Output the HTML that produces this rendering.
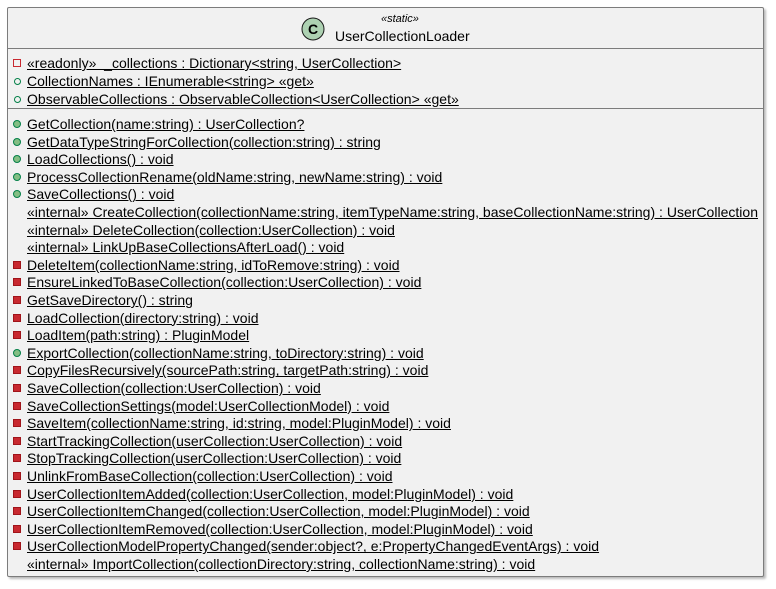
<!DOCTYPE html>
<html><head><meta charset="utf-8"><style>
html,body{margin:0;padding:0;background:#fff;width:776px;height:589px;overflow:hidden}
body{font-family:"Liberation Sans",sans-serif;color:#000;position:relative}
.box{position:absolute;left:7px;top:7px;width:755px;height:568px;background:#f1f1f1;border:1px solid #7c7c7c;border-radius:2px;box-shadow:2px 2px 2px #bbb}
.sep{position:absolute;left:8px;width:755px;height:1px;background:#7c7c7c}
.r{position:absolute;left:27px;font-size:14px;line-height:17px;white-space:nowrap;letter-spacing:0.01px}
.r span{text-decoration:underline}
.ic{position:absolute;left:-14px;top:4px;width:8px;height:8px;box-sizing:border-box}
.pf{border:1px solid #c82930}
.pm{background:#c82930;border:1px solid #a0141a}
.uf{border:1px solid #038048;border-radius:50%;left:-13px;top:5px;width:7px;height:7px}
.um{background:#84be84;border:1px solid #038048;border-radius:50%}
</style></head><body>
<div class="box"></div>
<div class="sep" style="top:48px"></div>
<div class="sep" style="top:108px"></div>
<svg style="position:absolute;left:300px;top:16px" width="28" height="28"><circle cx="13" cy="13" r="11" fill="#add1b2" stroke="#181818" stroke-width="1"/><text x="13" y="18" text-anchor="middle" font-family="Liberation Sans" font-weight="bold" font-size="14">C</text></svg>
<div style="position:absolute;left:381px;top:13px;font-size:11px;font-style:italic;line-height:13px">«static»</div>
<div style="position:absolute;left:335px;top:28px;font-size:14px;line-height:17px">UserCollectionLoader</div>

<div class="r" style="top:55px"><i class="ic pf"></i><span>«readonly» &nbsp;_collections : Dictionary&lt;string, UserCollection&gt;</span></div>
<div class="r" style="top:73px"><i class="ic uf"></i><span>CollectionNames : IEnumerable&lt;string&gt; «get»</span></div>
<div class="r" style="top:91px"><i class="ic uf"></i><span>ObservableCollections : ObservableCollection&lt;UserCollection&gt; «get»</span></div>

<div class="r" style="top:116px"><i class="ic um"></i><span>GetCollection(name:string) : UserCollection?</span></div>
<div class="r" style="top:133.6px"><i class="ic um"></i><span>GetDataTypeStringForCollection(collection:string) : string</span></div>
<div class="r" style="top:151.2px"><i class="ic um"></i><span>LoadCollections() : void</span></div>
<div class="r" style="top:168.8px"><i class="ic um"></i><span>ProcessCollectionRename(oldName:string, newName:string) : void</span></div>
<div class="r" style="top:186.4px"><i class="ic um"></i><span>SaveCollections() : void</span></div>
<div class="r" style="top:204px"><span>«internal» CreateCollection(collectionName:string, itemTypeName:string, baseCollectionName:string) : UserCollection</span></div>
<div class="r" style="top:221.6px"><span>«internal» DeleteCollection(collection:UserCollection) : void</span></div>
<div class="r" style="top:239.2px"><span>«internal» LinkUpBaseCollectionsAfterLoad() : void</span></div>
<div class="r" style="top:256.8px"><i class="ic pm"></i><span>DeleteItem(collectionName:string, idToRemove:string) : void</span></div>
<div class="r" style="top:274.4px"><i class="ic pm"></i><span>EnsureLinkedToBaseCollection(collection:UserCollection) : void</span></div>
<div class="r" style="top:292px"><i class="ic pm"></i><span>GetSaveDirectory() : string</span></div>
<div class="r" style="top:309.6px"><i class="ic pm"></i><span>LoadCollection(directory:string) : void</span></div>
<div class="r" style="top:327.2px"><i class="ic pm"></i><span>LoadItem(path:string) : PluginModel</span></div>
<div class="r" style="top:344.8px"><i class="ic um"></i><span>ExportCollection(collectionName:string, toDirectory:string) : void</span></div>
<div class="r" style="top:362.4px"><i class="ic pm"></i><span>CopyFilesRecursively(sourcePath:string, targetPath:string) : void</span></div>
<div class="r" style="top:380px"><i class="ic pm"></i><span>SaveCollection(collection:UserCollection) : void</span></div>
<div class="r" style="top:397.6px"><i class="ic pm"></i><span>SaveCollectionSettings(model:UserCollectionModel) : void</span></div>
<div class="r" style="top:415.2px"><i class="ic pm"></i><span>SaveItem(collectionName:string, id:string, model:PluginModel) : void</span></div>
<div class="r" style="top:432.8px"><i class="ic pm"></i><span>StartTrackingCollection(userCollection:UserCollection) : void</span></div>
<div class="r" style="top:450.4px"><i class="ic pm"></i><span>StopTrackingCollection(userCollection:UserCollection) : void</span></div>
<div class="r" style="top:468px"><i class="ic pm"></i><span>UnlinkFromBaseCollection(collection:UserCollection) : void</span></div>
<div class="r" style="top:485.6px"><i class="ic pm"></i><span>UserCollectionItemAdded(collection:UserCollection, model:PluginModel) : void</span></div>
<div class="r" style="top:503.2px"><i class="ic pm"></i><span>UserCollectionItemChanged(collection:UserCollection, model:PluginModel) : void</span></div>
<div class="r" style="top:520.8px"><i class="ic pm"></i><span>UserCollectionItemRemoved(collection:UserCollection, model:PluginModel) : void</span></div>
<div class="r" style="top:538.4px"><i class="ic pm"></i><span>UserCollectionModelPropertyChanged(sender:object?, e:PropertyChangedEventArgs) : void</span></div>
<div class="r" style="top:556px"><span>«internal» ImportCollection(collectionDirectory:string, collectionName:string) : void</span></div>
</body></html>
